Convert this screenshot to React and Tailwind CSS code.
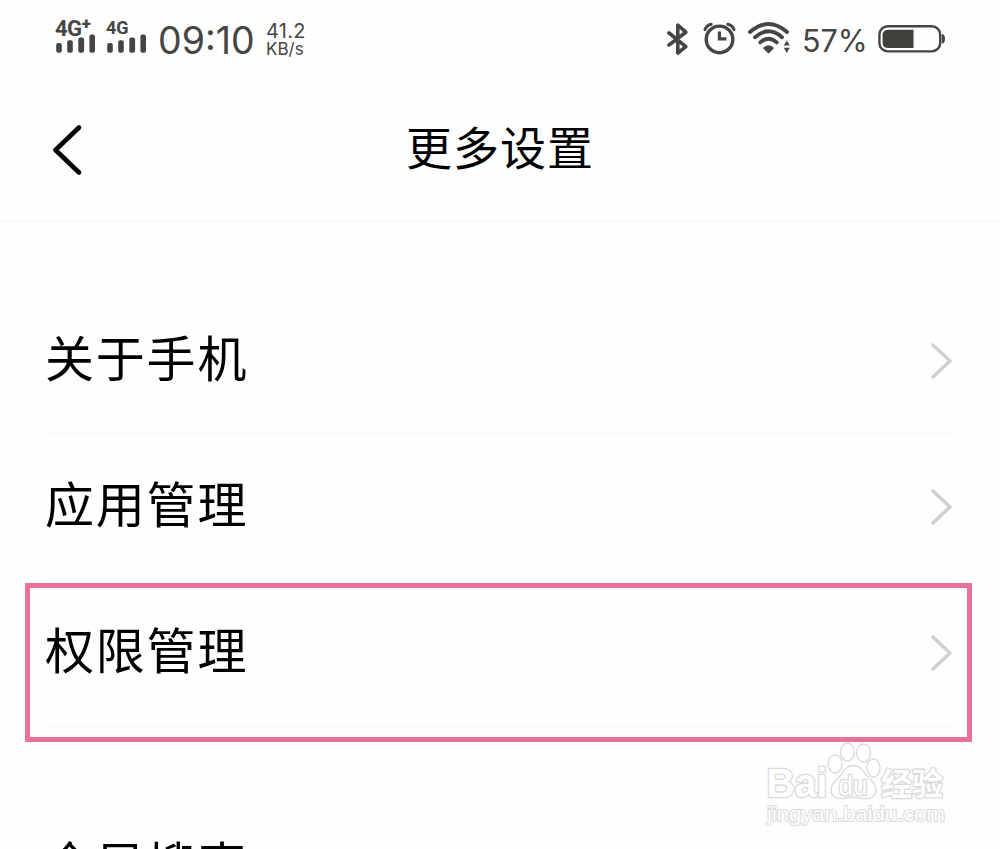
/**
 * More Settings Page
 */
import React from 'react';

const groups = [
  [
    { id: 'about', label: '关于手机' },
    { id: 'apps', label: '应用管理' },
    { id: 'permissions', label: '权限管理' },
  ],
  [{ id: 'search', label: '全局搜索' }],
];

function SignalBars() {
  return (
    <svg width="40" height="20" viewBox="0 0 40 20" fill="#454545" className="block">
      <rect x="1.2" y="10" width="5.6" height="9.8" rx="2" />
      <rect x="12.2" y="7.3" width="5.6" height="12.5" rx="2" />
      <rect x="23.3" y="4.6" width="5.8" height="15.2" rx="2" />
      <rect x="34.4" y="1.6" width="5.6" height="18.2" rx="2" />
    </svg>
  );
}

function BluetoothIcon() {
  return (
    <svg width="22" height="34" viewBox="0 0 22 34" fill="none" stroke="#454545" strokeWidth="3.6" strokeLinejoin="round" strokeLinecap="round">
      <path d="M2 11 L18.8 24.6 L10.8 31 V3 L18.8 10.2 L2 23" />
    </svg>
  );
}

function AlarmIcon() {
  return (
    <svg width="34" height="34" viewBox="0 0 34 34" fill="none" stroke="#454545">
      <circle cx="16.5" cy="17.4" r="13.3" strokeWidth="3.4" />
      <path d="M16.4 9.6 V16.8 H23.4" strokeWidth="3.2" />
      <path d="M2 7.6 Q3.6 3.2 8.2 2.2 M31 7.6 Q29.4 3.2 24.8 2.2" strokeWidth="3" strokeLinecap="round" />
    </svg>
  );
}

function WifiIcon() {
  return (
    <svg width="44" height="34" viewBox="0 0 44 34" fill="none" stroke="#454545" strokeWidth="3.8" strokeLinecap="round">
      <path d="M2 10 Q20.5 -6 39 10" />
      <path d="M7 15.2 Q20.5 3.4 34 15.2" />
      <path d="M12.3 20.4 Q20.5 13 28.7 20.4" />
      <path d="M14.9 26 Q20.5 20.6 26.1 26 L21.5 30.8 Q20.5 31.8 19.5 30.8 Z" fill="#454545" stroke="none" />
      <path d="M35.8 23.6 L38.8 18.5 L41.8 23.6 Z M35.8 25.8 L38.8 31 L41.8 25.8 Z" fill="#454545" stroke="none" />
    </svg>
  );
}

function BatteryIcon() {
  return (
    <svg width="68" height="30" viewBox="0 0 68 30" fill="none">
      <rect x="1.4" y="2.2" width="60.8" height="25.2" rx="8.5" stroke="#454545" strokeWidth="2.4" />
      <path d="M10.5 5.8 H35.5 V24 H10.5 Q4.6 24 4.6 18.5 V11.3 Q4.6 5.8 10.5 5.8 Z" fill="#3f403c" />
      <path d="M63.8 10 Q67 10 67 14.8 Q67 19.6 63.8 19.6 Z" fill="#454545" />
    </svg>
  );
}

function StatusBar() {
  return (
    <div className="flex h-20 items-start justify-between pl-[55px] pr-[54px] font-[Inter,sans-serif] text-[#454545]">
      <div className="flex">
        <div className="w-[51px] pt-[19px] font-[Roboto,sans-serif]">
          <div className="flex h-[14px] items-center text-[22px] leading-none font-bold">
            <span className="pt-[6px] tracking-[-0.5px]">4G</span>
            <span className="pb-1.5 text-[17px] font-black">+</span>
          </div>
          <SignalBars />
        </div>
        <div className="w-[52px] pt-[19px] font-[Roboto,sans-serif]">
          <div className="flex h-[14px] items-center pt-1 text-[18px] leading-none font-bold">4G</div>
          <SignalBars />
        </div>
        <div className="w-[108px] pt-[22px] text-[37.5px] leading-[38px]">09:10</div>
        <div className="pt-[21px] text-[20px] leading-5 tracking-[0.3px]">
          <div>41.2</div>
          <div className="text-[17px] leading-4 tracking-normal">KB/s</div>
        </div>
      </div>
      <div className="flex pt-[22px]">
        <BluetoothIcon />
        <div className="ml-[14px]"><AlarmIcon /></div>
        <div className="ml-[11px]"><WifiIcon /></div>
        <div className="ml-[10px] w-[76px] pt-[3px] text-[30.5px] leading-[31px]">57%</div>
        <div className="pt-0.5"><BatteryIcon /></div>
      </div>
    </div>
  );
}

function Header() {
  return (
    <div className="grid h-[142px] grid-cols-3 items-center border-b-2 border-[#f9f9f9]">
      <button className="mb-[3px] ml-[50px] w-9">
        <svg width="36" height="52" viewBox="0 0 36 52" fill="none" stroke="#000" strokeWidth="4.6" strokeLinecap="round" strokeLinejoin="round">
          <path d="M29 4.5 L5.5 27 L29 49.5" />
        </svg>
      </button>
      <h1 className="mb-2.5 text-center text-[46px] leading-[60px] tracking-[1px] whitespace-nowrap">更多设置</h1>
    </div>
  );
}

function SettingsRow({ label }) {
  return (
    <div className="flex h-[146px] items-center justify-between border-b-2 border-[#f9f9f9] pl-px pr-0.5">
      <span className="mb-[11px] text-[49px] leading-[60px] tracking-[1.8px]">{label}</span>
      <svg width="24" height="38" viewBox="0 0 24 38" fill="none" stroke="#d0d0d0" strokeWidth="3.6" strokeLinecap="round" strokeLinejoin="round">
        <path d="M3 3 L20 19 L3 35" />
      </svg>
    </div>
  );
}

function Watermark() {
  return (
    <svg width="190" height="96" viewBox="0 0 190 96" className="absolute left-[762px] top-[738px]" fill="#fff" stroke="#dadada" strokeWidth="1.3">
      <ellipse cx="73" cy="26" rx="7" ry="9" />
      <ellipse cx="85.5" cy="14" rx="7" ry="9" />
      <ellipse cx="101.5" cy="15" rx="7" ry="9" />
      <ellipse cx="111.5" cy="30" rx="6.5" ry="9" />
      <path d="M91 27.5 C98 27.5 101 33 105 38 C110 43 114 46 114 52 C114 59 108 61.5 101 60.5 Q91 58 81 60.5 C74 61.5 69 58 69 51 C69 45 75 42 79 37 C82 32 85 27.5 91 27.5 Z" />
      <g strokeWidth="2.6" strokeLinejoin="round" style={{ paintOrder: 'stroke' }} fontFamily="Liberation Sans, sans-serif">
        <text x="4.5" y="59" fontSize="40" fontWeight="bold" textLength="61" lengthAdjust="spacingAndGlyphs">Bai</text>
        <text x="76.5" y="56.5" fontSize="27" textLength="29" lengthAdjust="spacingAndGlyphs">du</text>
        <text x="119" y="57" fontSize="31" fontWeight="bold" fontFamily="Noto Sans CJK SC, sans-serif" textLength="62">经验</text>
        <text x="5" y="83" fontSize="21" strokeWidth="2" textLength="178" lengthAdjust="spacingAndGlyphs">jingyan.baidu.com</text>
      </g>
    </svg>
  );
}

export default function App() {
  return (
    <div className="relative h-[849px] w-[1000px] overflow-hidden bg-[#fefefe] font-['Noto_Sans_CJK_SC',sans-serif] text-black">
      <StatusBar />
      <Header />

      {/* Settings groups */}
      <div className="flex flex-col gap-[68px] px-11 pt-[67px]">
        {groups.map((rows) => (
          <div key={rows[0].id}>
            {rows.map((row) => (
              <SettingsRow key={row.id} label={row.label} />
            ))}
          </div>
        ))}
      </div>

      {/* Highlight around the permissions row */}
      <div className="absolute left-[25px] top-[583px] h-[159px] w-[947px] border-[5px] border-[#ec719a]" />
      <Watermark />
    </div>
  );
}
